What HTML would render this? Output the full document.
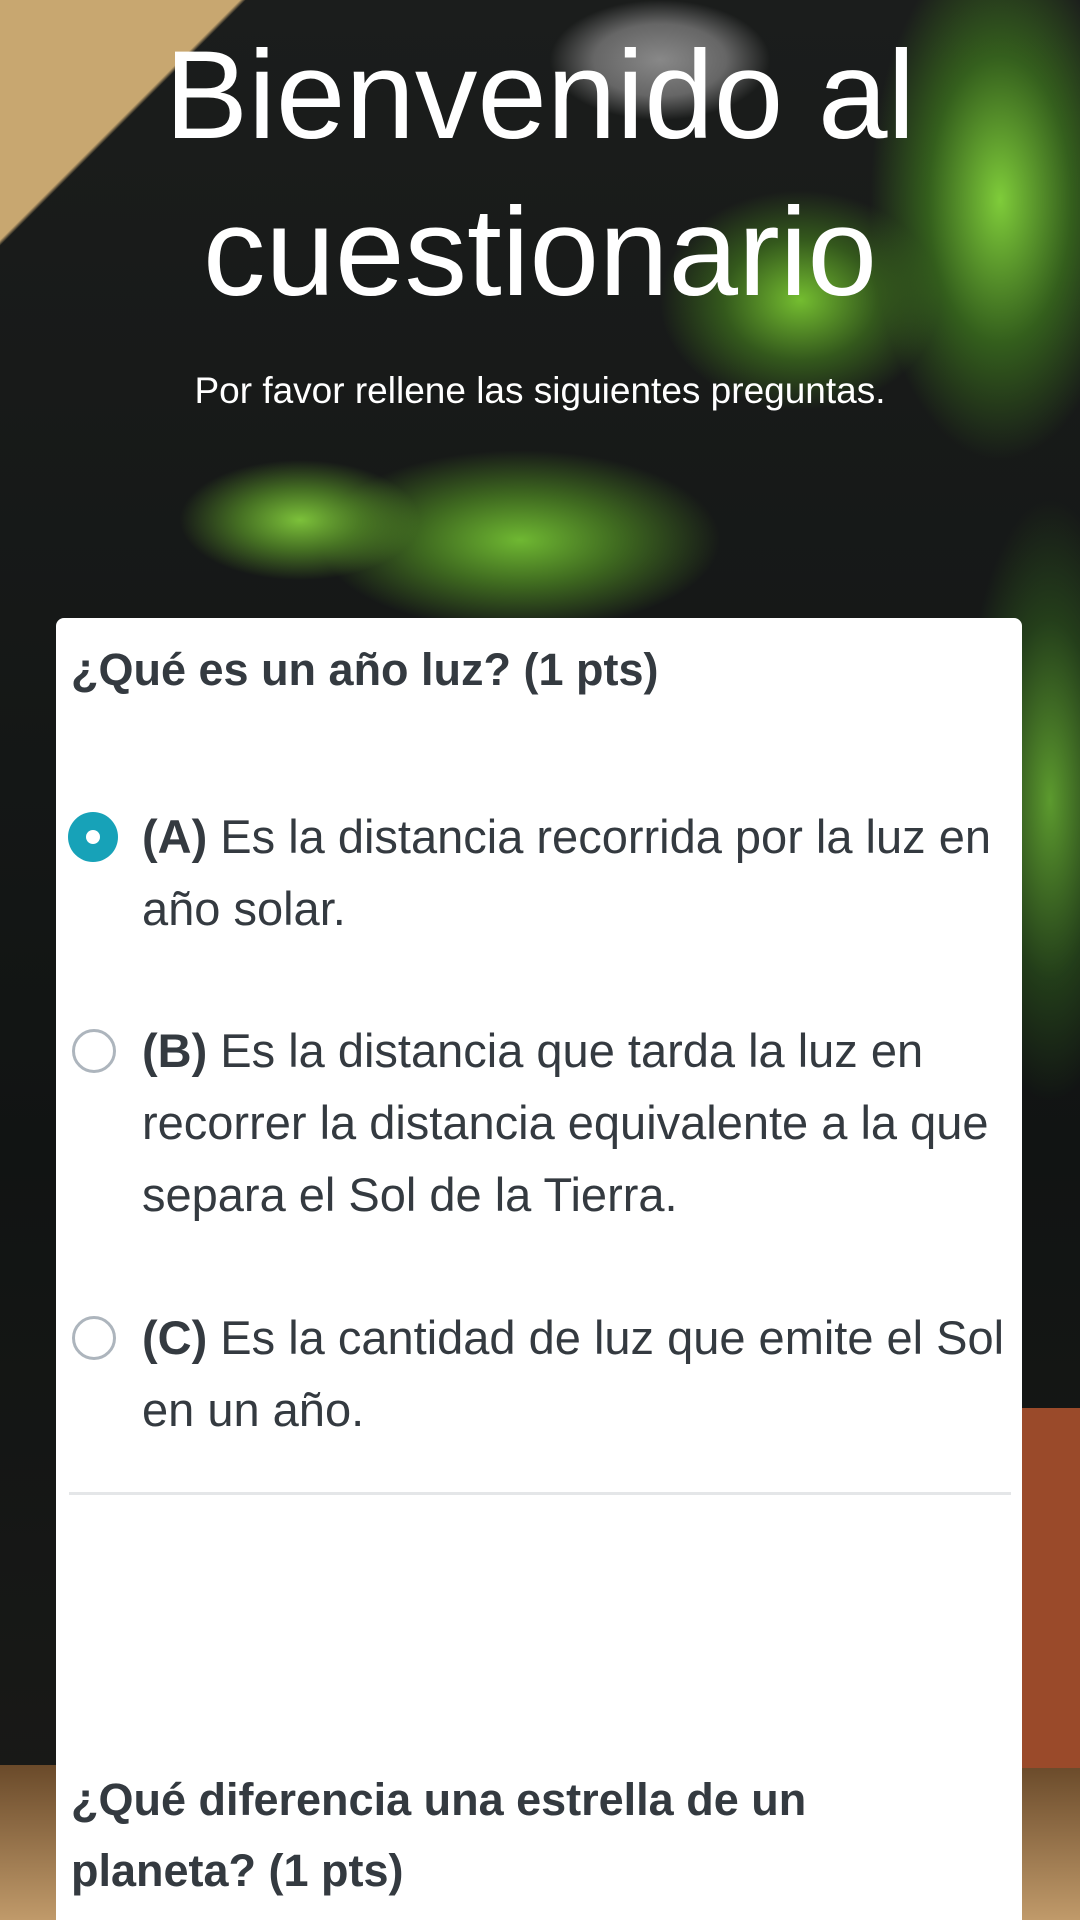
<!DOCTYPE html>
<html><head><meta charset="utf-8"><style>
html,body{margin:0;padding:0;width:1080px;height:1920px;overflow:hidden}
body{position:relative;font-family:"Liberation Sans",sans-serif;
background:
radial-gradient(ellipse 120px 60px at 300px 520px,#7cc13a 0%,rgba(90,150,40,.7) 50%,transparent 100%),
radial-gradient(ellipse 200px 90px at 520px 540px,#6fb832 0%,rgba(80,140,35,.7) 50%,transparent 100%),
radial-gradient(ellipse 140px 110px at 800px 300px,#74bd30 0%,rgba(70,130,30,.6) 55%,transparent 100%),
radial-gradient(ellipse 130px 260px at 1000px 200px,#7fcc3a 0%,rgba(70,140,30,.6) 55%,transparent 100%),
radial-gradient(ellipse 90px 300px at 1050px 800px,#5c9a2e 0%,rgba(50,100,30,.5) 60%,transparent 100%),
radial-gradient(ellipse 110px 60px at 660px 60px,#888 0%,#666 60%,transparent 100%),
linear-gradient(135deg,#c8a770 0%,#c8a770 8%,transparent 8.2%),
linear-gradient(180deg,#1b1d1c 0%,#111413 60%,#1a1a18 100%);}
.h{position:absolute;left:0;width:1080px;text-align:center;color:#fff;font-size:125px;font-weight:300;line-height:1}
.sub{position:absolute;left:0;width:1080px;text-align:center;color:#fff;font-size:37px;top:370px}
.floor{position:absolute;left:0;right:0;top:1765px;height:155px;background:linear-gradient(#6a4a2a,#c09a6a)}
.pot{position:absolute;left:1022px;top:1408px;width:58px;height:360px;background:#9a4a2a}
.card{position:absolute;left:56px;top:618px;width:966px;height:1302px;background:#fff;border-radius:8px 8px 0 0;color:#343a40}
.q{position:absolute;left:15px;font-weight:bold;font-size:45px;line-height:71px}
.opt{position:absolute;left:86px;width:870px;font-size:47px;line-height:72px}
.r{position:absolute;left:16px;width:44px;height:44px;border-radius:50%;border:3px solid #adb5bd;box-sizing:border-box;background:#fff}
.r.on{background:#17a2b8;border:none;width:50px;height:50px;left:12px}
.r.on::after{content:"";position:absolute;left:18px;top:18px;width:14px;height:14px;border-radius:50%;background:#fff}
hr{position:absolute;left:13px;width:942px;top:874px;margin:0;border:0;border-top:3px solid #e4e6e8}
</style></head><body>
<div class="floor"></div><div class="pot"></div>
<div class="h" style="top:33px">Bienvenido al</div>
<div class="h" style="top:190px">cuestionario</div>
<div class="sub">Por favor rellene las siguientes preguntas.</div>
<div class="card">
<div class="q" style="top:16px">¿Qué es un año luz? (1 pts)</div>
<div class="r on" style="top:194px"></div>
<div class="opt" style="top:183px"><b>(A)</b> Es la distancia recorrida por la luz en año solar.</div>
<div class="r" style="top:411px"></div>
<div class="opt" style="top:397px"><b>(B)</b> Es la distancia que tarda la luz en recorrer la distancia equivalente a la que separa el Sol de la Tierra.</div>
<div class="r" style="top:698px"></div>
<div class="opt" style="top:684px"><b>(C)</b> Es la cantidad de luz que emite el Sol en un año.</div>
<hr>
<div class="q" style="top:1146px;width:800px">¿Qué diferencia una estrella de un planeta? (1 pts)</div>
</div>
</body></html>
